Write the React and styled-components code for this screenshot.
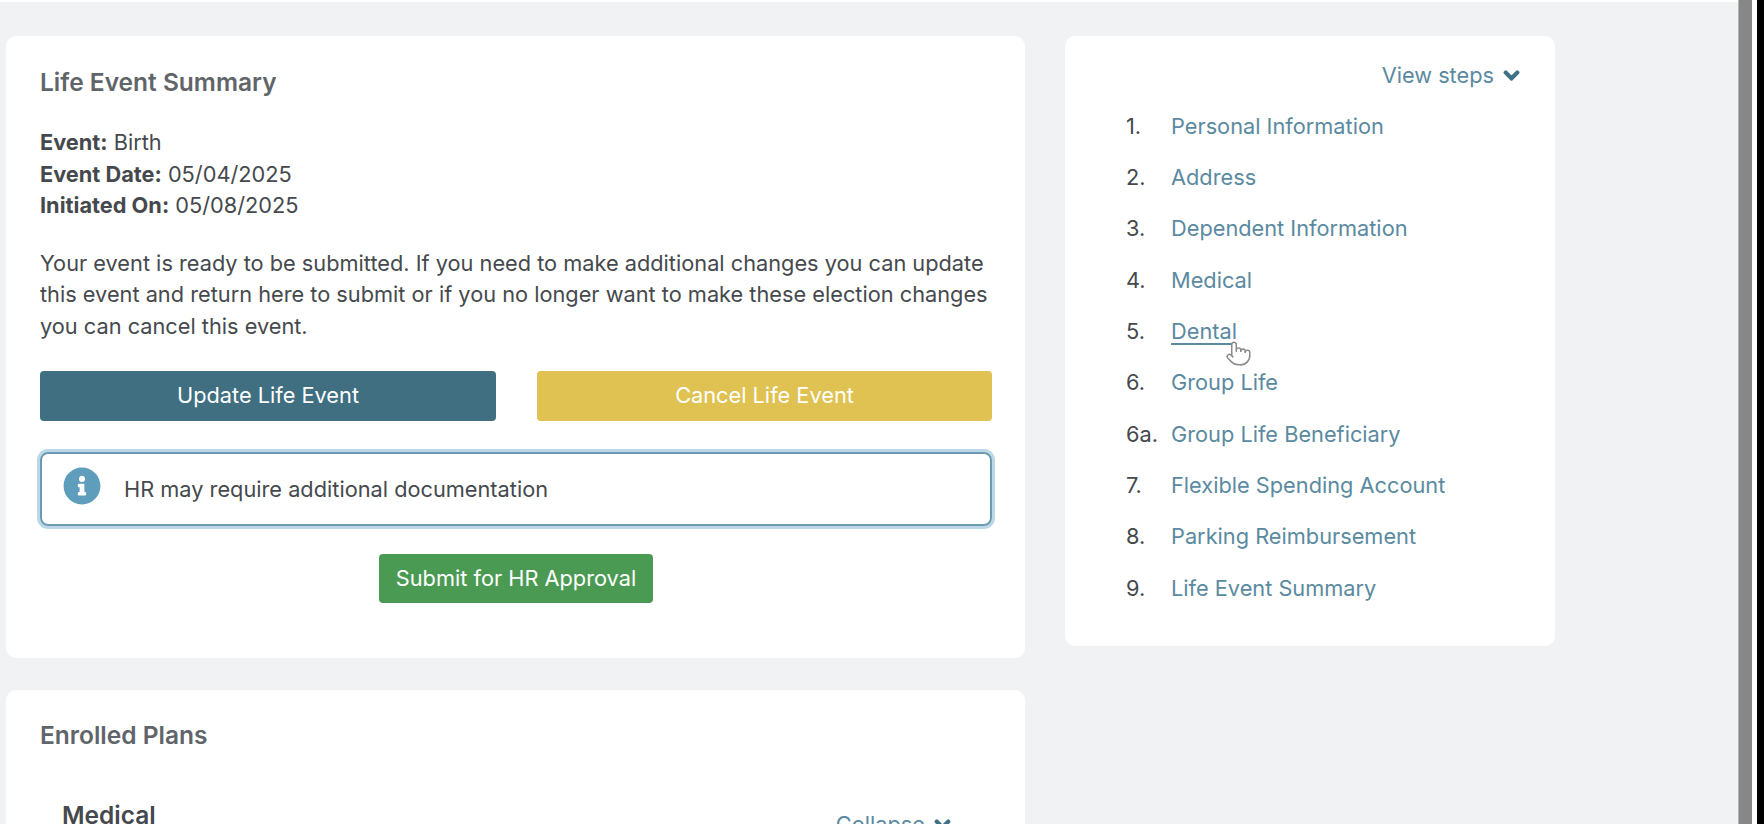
import React from "react";
import styled, { createGlobalStyle } from "styled-components";
import { FaChevronDown, FaInfoCircle } from "react-icons/fa";
import { Pointer } from "lucide-react";

const GlobalStyle = createGlobalStyle`
    html, body {
        margin: 0;
        height: 100%;
        overflow: hidden;
        background: #fff;
    }
    #root {
        height: 100%;
    }
`;

const Frame = styled.div`
    display: flex;
    height: 824px;
    overflow: hidden;
    font-family: Inter, "Liberation Sans", sans-serif;
    font-size: 21.75px;
    line-height: 31.5px;
    color: #45494d;
`;

const Content = styled.main`
    flex: 0 0 1738px;
    margin-top: 2px;
    padding: 34px 0 0 6px;
    box-sizing: border-box;
    background: #f1f2f4;
    display: flex;
    align-items: flex-start;
    gap: 40px;
`;

const Scrollbar = styled.div`
    flex: 0 0 14px;
    background: #878787;
    border-left: 1px solid #b5b5b5;
    box-sizing: border-box;
`;

const WhiteGap = styled.div`
    flex: 0 0 5px;
    background: #fff;
`;

const BlackEdge = styled.div`
    flex: 1;
    background: #000;
`;

const LeftColumn = styled.div`
    flex: 0 0 1019px;
    display: flex;
    flex-direction: column;
    gap: 32px;
`;

const Card = styled.section`
    background: #fff;
    border-radius: 10px;
    box-sizing: border-box;
`;

const SummaryCard = styled(Card)`
    height: 622px;
    padding: 30px 33px 0 34px;
`;

const PlansCard = styled(Card)`
    height: 300px;
    padding: 29px 33px 0 34px;
`;

const Title = styled.h2`
    margin: 0;
    font-size: 24.5px;
    font-weight: 600;
    line-height: 32px;
    color: #5f6569;
`;

const Details = styled.div`
    margin-top: 29px;
`;

const Label = styled.strong`
    font-weight: 700;
`;

const Message = styled.p`
    margin: 26px 0 0;
`;

const ButtonRow = styled.div`
    margin-top: 29px;
    display: grid;
    grid-template-columns: 456px 455px;
    justify-content: space-between;
`;

const Button = styled.button`
    height: 50px;
    border: 0;
    border-radius: 4px;
    padding: 0;
    font: inherit;
    color: #fff;
    background: ${(p) => p.$bg};
`;

const Alert = styled.div`
    margin-top: 31px;
    height: 74px;
    box-sizing: border-box;
    border: 2px solid #6b9ab3;
    border-radius: 8px;
    box-shadow: 0 0 0 3px #bcd8e6;
    display: flex;
    align-items: center;
    gap: 23px;
    padding: 2px 0 0 21px;
`;

const AlertIcon = styled(FaInfoCircle)`
    flex: none;
    width: 38px;
    height: 38px;
    margin-top: -9px;
    color: #5f9dbd;
`;

const SubmitRow = styled.div`
    margin-top: 28px;
    display: flex;
    justify-content: center;
`;

const SubmitButton = styled(Button)`
    width: 274px;
    height: 49px;
`;

const PlanHeader = styled.div`
    margin-top: 48px;
    padding: 0 41px 0 22px;
    display: flex;
    justify-content: space-between;
    align-items: flex-start;
`;

const PlanName = styled.h3`
    margin: 0;
    font-size: 24.5px;
    font-weight: 600;
    line-height: 32px;
    color: #45494d;
`;

const Toggle = styled.a`
    display: inline-flex;
    align-items: center;
    gap: 9px;
    color: #5a8aa0;
`;

const CollapseToggle = styled(Toggle)`
    margin-top: 10px;
`;

const Chevron = styled(FaChevronDown)`
    width: 17px;
    height: 17px;
    color: #3f7186;
    stroke: currentColor;
    stroke-width: 45;
`;

const StepsCard = styled(Card)`
    flex: 0 0 490px;
    height: 610px;
    padding: 24px 35px 0 0;
    display: flex;
    flex-direction: column;
`;

const StepsHeader = styled.div`
    display: flex;
    justify-content: flex-end;
`;

const StepList = styled.ol`
    list-style: none;
    margin: 19px 0 0;
    padding: 0 0 0 61px;
    display: flex;
    flex-direction: column;
    gap: 19.85px;
`;

const Step = styled.li`
    display: flex;
`;

const StepNumber = styled.span`
    flex: 0 0 45px;
`;

const StepLink = styled.a`
    position: relative;
    color: #5a8aa0;
    text-decoration: ${(p) => (p.$active ? "underline" : "none")};
    text-underline-offset: 4px;
`;

const Cursor = styled(Pointer)`
    position: absolute;
    left: 54px;
    top: 24px;
    width: 27px;
    height: 27px;
    stroke-width: 1.3;
    color: #8a8a8a;
    fill: #fff;
`;

const steps = [
    ["1.", "Personal Information"],
    ["2.", "Address"],
    ["3.", "Dependent Information"],
    ["4.", "Medical"],
    ["5.", "Dental"],
    ["6.", "Group Life"],
    ["6a.", "Group Life Beneficiary"],
    ["7.", "Flexible Spending Account"],
    ["8.", "Parking Reimbursement"],
    ["9.", "Life Event Summary"],
];

const App = () => {
    return (
        <Frame>
            <GlobalStyle />
            <Content>
                <LeftColumn>
                    <SummaryCard>
                        <Title>Life Event Summary</Title>
                        <Details>
                            <div>
                                <Label>Event:</Label> Birth
                            </div>
                            <div>
                                <Label>Event Date:</Label> 05/04/2025
                            </div>
                            <div>
                                <Label>Initiated On:</Label> 05/08/2025
                            </div>
                        </Details>
                        <Message>
                            Your event is ready to be submitted. If you need to
                            make additional changes you can update this event
                            and return here to submit or if you no longer want
                            to make these election changes you can cancel this
                            event.
                        </Message>
                        <ButtonRow>
                            <Button $bg="#3f6f80">Update Life Event</Button>
                            <Button $bg="#e0c252">Cancel Life Event</Button>
                        </ButtonRow>
                        <Alert>
                            <AlertIcon />
                            <span>HR may require additional documentation</span>
                        </Alert>
                        <SubmitRow>
                            <SubmitButton $bg="#4b9a53">
                                Submit for HR Approval
                            </SubmitButton>
                        </SubmitRow>
                    </SummaryCard>
                    <PlansCard>
                        <Title>Enrolled Plans</Title>
                        <PlanHeader>
                            <PlanName>Medical</PlanName>
                            <CollapseToggle>
                                Collapse <Chevron />
                            </CollapseToggle>
                        </PlanHeader>
                    </PlansCard>
                </LeftColumn>
                <StepsCard>
                    <StepsHeader>
                        <Toggle>
                            View steps <Chevron />
                        </Toggle>
                    </StepsHeader>
                    <StepList>
                        {steps.map(([number, label]) => (
                            <Step key={label}>
                                <StepNumber>{number}</StepNumber>
                                <StepLink $active={label === "Dental"}>
                                    {label}
                                    {label === "Dental" && <Cursor />}
                                </StepLink>
                            </Step>
                        ))}
                    </StepList>
                </StepsCard>
            </Content>
            <Scrollbar />
            <WhiteGap />
            <BlackEdge />
        </Frame>
    );
};

export default App;
